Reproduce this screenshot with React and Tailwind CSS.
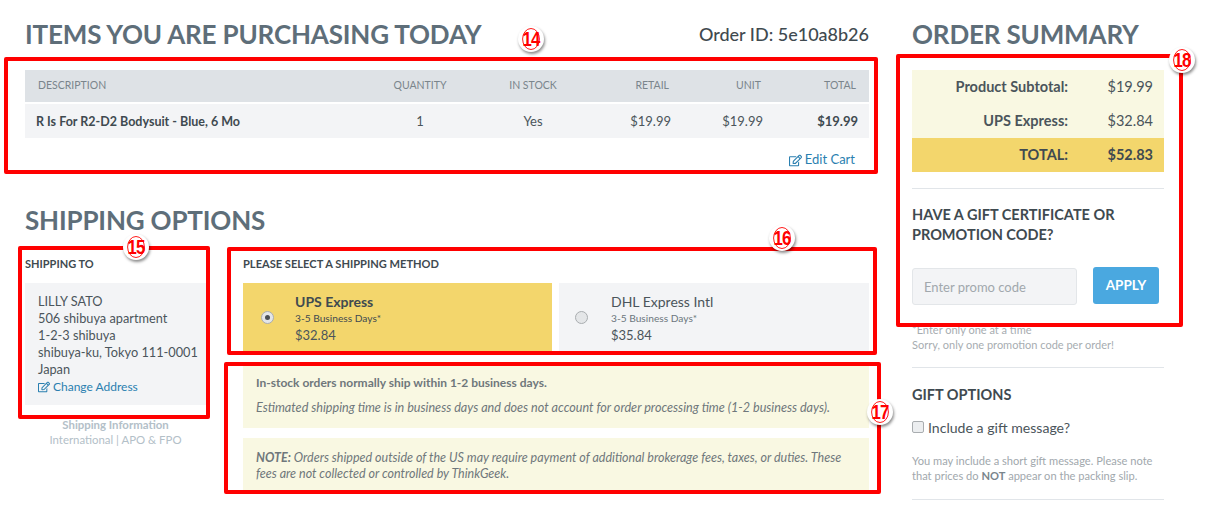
import { FaRegEdit } from 'react-icons/fa';

const Badge = ({ n, className }) => (
  <div className={`absolute w-[26px] h-[26px] rounded-full bg-white shadow-[1px_2px_3px_rgba(0,0,0,0.45)] flex items-center justify-center ${className}`}>
    <div className="w-[22px] h-[22px] rounded-full border border-[#ff0000] flex items-center justify-center text-[#ff0000] text-[21px] font-bold tracking-[-1px] scale-x-[0.8] font-['Liberation_Sans_Narrow','Liberation_Sans',sans-serif]">
      {n}
    </div>
  </div>
);

const RedBox = ({ className }) => (
  <div className={`absolute border-[4px] border-[#ff0000] rounded-[2px] pointer-events-none ${className}`}></div>
);

const Heading = ({ children }) => (
  <h2 className="text-[26px] leading-[34px] font-bold text-[#5e6e79] tracking-[-0.17px]">{children}</h2>
);

const tableCols = 'grid grid-cols-[335px_120px_106px_85px_92px_95px] pr-[11px] items-center';

const ItemsTable = () => (
  <div>
    <div className={`${tableCols} h-[32px] bg-[#dee2e6] text-[10.5px] text-[#7a858c]`}>
      <div className="pl-[13px]">DESCRIPTION</div>
      <div className="text-center">QUANTITY</div>
      <div className="text-center">IN STOCK</div>
      <div className="text-right pr-[2px]">RETAIL</div>
      <div className="text-right pr-[2px]">UNIT</div>
      <div className="text-right pr-[2px]">TOTAL</div>
    </div>
    <div className={`${tableCols} h-[34px] mt-[2px] pt-[2px] bg-[#f3f4f6] text-[13px] text-[#4b555b]`}>
      <div className="pl-[11px] font-bold text-[#3f4a50] text-[12.5px]">R Is For R2-D2 Bodysuit - Blue, 6 Mo</div>
      <div className="text-center">1</div>
      <div className="text-center">Yes</div>
      <div className="text-right">$19.99</div>
      <div className="text-right">$19.99</div>
      <div className="text-right font-bold text-[#3f4a50]">$19.99</div>
    </div>
    <div className="flex justify-end items-center h-[20px] mt-[12px] pr-[14px] text-[13px] text-[#2a7fb0]">
      <FaRegEdit className="w-[13px] h-[13px] mr-[3px]" />
      <span>Edit Cart</span>
    </div>
  </div>
);

const ShippingTo = () => (
  <div className="w-[181px] shrink-0">
    <div className="text-[11px] leading-[14px] font-bold text-[#3f4a50] -mt-px">SHIPPING TO</div>
    <div className="mt-[12px] h-[122px] bg-[#f3f4f6] pl-[13px] pt-[10px] text-[12.75px] leading-[17px] text-[#4b555b] whitespace-nowrap">
      <div>LILLY SATO</div>
      <div>506 shibuya apartment</div>
      <div>1-2-3 shibuya</div>
      <div>shibuya-ku, Tokyo 111-0001</div>
      <div>Japan</div>
      <div className="flex items-center text-[#2a7fb0] text-[12px]">
        <FaRegEdit className="w-[12px] h-[12px] mr-[3px]" />
        <span>Change Address</span>
      </div>
    </div>
    <div className="mt-[12px] text-center text-[11.4px] leading-[15px] text-[#b3c0c8]">
      <div className="font-bold">Shipping Information</div>
      <div>International | APO &amp; FPO</div>
    </div>
  </div>
);

const Radio = ({ checked }) => (
  <span className="w-[13px] h-[13px] rounded-full border border-[#a9adb0] bg-[#e4e6e8] flex items-center justify-center shrink-0">
    {checked && <span className="w-[5px] h-[5px] rounded-full bg-[#4a4f53]"></span>}
  </span>
);

const MethodCard = ({ name, days, price, checked, rowClass }) => (
  <div className={`h-[69px] flex items-start ${rowClass}`}>
    <div className={`h-[68px] flex items-center ${checked ? 'w-[52px] pl-[18px]' : 'w-[52px] pl-[16px]'}`}>
      <Radio checked={checked} />
    </div>
    <div className="pt-[10px] text-[#4b555b]">
      <div className={`text-[14px] leading-[18px] ${checked ? 'font-bold text-[#3f4a50]' : ''}`}>{name}</div>
      <div className={`text-[10.2px] leading-[14px] ${checked ? 'text-[#3f4a50]' : 'text-[#6b767d]'}`}>{days}</div>
      <div className="text-[13px] leading-[17px] mt-[2px]">{price}</div>
    </div>
  </div>
);

const ShippingMethods = () => (
  <div className="flex-1 min-w-0">
    <div className="text-[11.1px] leading-[14px] font-bold text-[#3f4a50] -mt-px">PLEASE SELECT A SHIPPING METHOD</div>
    <div className="mt-[12px] flex gap-[7px]">
      <MethodCard name="UPS Express" days="3-5 Business Days*" price="$32.84" checked rowClass="w-[309px] bg-[#f3d66c]" />
      <MethodCard name="DHL Express Intl" days="3-5 Business Days*" price="$35.84" rowClass="flex-1 bg-[#f3f4f6]" />
    </div>
    <div className="mt-[14px] h-[62px] bg-[#f9f8e2] pl-[13px] pt-[9px] text-[#6f777b]">
      <div className="font-bold text-[12px] leading-[16px]">In-stock orders normally ship within 1-2 business days.</div>
      <div className="italic text-[12.6px] leading-[16px] mt-[9px] whitespace-nowrap">Estimated shipping time is in business days and does not account for order processing time (1-2 business days).</div>
    </div>
    <div className="mt-[10px] h-[52px] bg-[#f9f8e2] pl-[13px] pt-[12px] pr-[14px] text-[12.5px] leading-[16px] text-[#6f777b] italic">
      <div><b>NOTE:</b> Orders shipped outside of the US may require payment of additional brokerage fees, taxes, or duties. These fees are not collected or controlled by ThinkGeek.</div>
    </div>
  </div>
);

const SummaryRow = ({ label, value, className }) => (
  <div className={`flex h-[34px] items-center ${className}`}>
    <div className="w-[156px] text-right">{label}</div>
    <div className="flex-1 text-right pr-[11px]">{value}</div>
  </div>
);

const OrderSummary = () => (
  <div className="w-[252px] shrink-0">
    <Heading>ORDER SUMMARY</Heading>
    <div className="mt-[19px] text-[14.5px] text-[#4b555b]">
      <div className="bg-[#f9f8e2]">
        <SummaryRow label={<b>Product Subtotal:</b>} value="$19.99" />
        <SummaryRow label={<b>UPS Express:</b>} value="$32.84" />
      </div>
      <SummaryRow label={<b>TOTAL:</b>} value={<b>$52.83</b>} className="bg-[#f3d66c] text-[#3f4a50]" />
    </div>
    <div className="mt-[16px] border-t border-[#e1e5e9]"></div>
    <div className="mt-[16px] text-[14.5px] leading-[20px] font-bold text-[#3f4a50] whitespace-nowrap">
      HAVE A GIFT CERTIFICATE OR<br />PROMOTION CODE?
    </div>
    <div className="mt-[22px] flex items-start gap-[16px]">
      <input
        placeholder="Enter promo code"
        className="w-[165px] h-[37px] mt-px bg-[#f3f4f6] border border-[#e3e6e9] rounded-[3px] px-[11px] text-[13px] placeholder:text-[#a1a8ad] outline-none"
      />
      <button className="w-[66px] h-[37px] bg-[#4aa8e0] rounded-[3px] text-white font-bold text-[13.5px]">APPLY</button>
    </div>
    <div className="mt-[17px] text-[11px] leading-[15px] text-[#a7adb1]">
      <div>*Enter only one at a time</div>
      <div>Sorry, only one promotion code per order!</div>
    </div>
    <div className="mt-[15px] border-t border-[#e1e5e9]"></div>
    <div className="mt-[18px] text-[14.5px] leading-[18px] font-bold text-[#3f4a50]">GIFT OPTIONS</div>
    <label className="mt-[14px] flex items-center h-[20px] text-[14.1px] text-[#4b555b]">
      <span className="w-[12px] h-[12px] mr-[4px] -mt-[3px] rounded-[2px] border border-[#a9adb0] bg-[#eceef0]"></span>
      Include a gift message?
    </label>
    <div className="mt-[15px] text-[11.1px] leading-[15px] text-[#a1a8ad]">
      You may include a short gift message. Please note<br />
      that prices do <b className="font-bold text-[#7a858c]">NOT</b> appear on the packing slip.
    </div>
    <div className="mt-[16px] border-t border-[#e1e5e9]"></div>
  </div>
);

export default function App() {
  return (
    <div className="relative w-[1207px] h-[512px] overflow-hidden bg-white font-['Lato',sans-serif]">
      <div className="flex gap-[43px] pl-[25px] pt-[17px]">
        <div className="w-[844px] shrink-0">
          <div className="flex items-center justify-between">
            <Heading>ITEMS YOU ARE PURCHASING TODAY</Heading>
            <div className="text-[18px] font-medium text-[#3f4a50]">Order ID: 5e10a8b26</div>
          </div>
          <div className="mt-[19px]">
            <ItemsTable />
          </div>
          <div className="mt-[33px]">
            <Heading>SHIPPING OPTIONS</Heading>
          </div>
          <div className="mt-[21px] flex gap-[37px]">
            <ShippingTo />
            <ShippingMethods />
          </div>
        </div>
        <OrderSummary />
      </div>

      {/* annotation boxes drawn over the page */}
      <RedBox className="left-[4px] top-[57px] w-[874px] h-[117px]" />
      <RedBox className="left-[18px] top-[246px] w-[192px] h-[173px]" />
      <RedBox className="left-[227px] top-[247px] w-[650px] h-[108px]" />
      <RedBox className="left-[224px] top-[362px] w-[657px] h-[132px]" />
      <RedBox className="left-[896px] top-[54px] w-[287px] h-[273px]" />

      <Badge n="14" className="left-[518px] top-[26px]" />
      <Badge n="15" className="left-[123px] top-[234px]" />
      <Badge n="16" className="left-[769px] top-[225px]" />
      <Badge n="17" className="left-[867px] top-[399px]" />
      <Badge n="18" className="left-[1169px] top-[47px]" />
    </div>
  );
}
